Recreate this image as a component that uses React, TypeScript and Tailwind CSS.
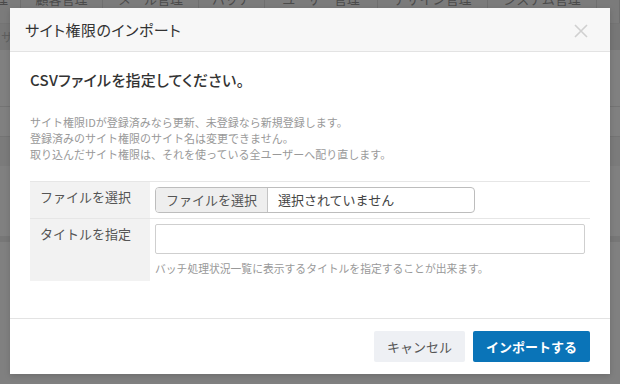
import React from "react";

const font = { fontFamily: '"Noto Sans CJK JP", "Noto Sans", sans-serif' };

const tabs: { t: string; w: string }[] = [
  { t: "理", w: "w-[21px] justify-end pr-[12px]" },
  { t: "顧客管理", w: "w-[82px]" },
  { t: "メール管理", w: "w-[96px]" },
  { t: "バッチ", w: "w-[66px]" },
  { t: "ユーザー管理", w: "w-[113px]" },
  { t: "デザイン管理", w: "w-[110px]" },
  { t: "システム管理", w: "w-[109px]" },
  { t: "", w: "flex-1" },
];

export default function App() {
  return (
    <div className="relative w-[620px] h-[384px] overflow-hidden bg-[#808080]" style={font}>
      {/* background page (behind overlay) */}
      <div className="flex flex-col">
        <div className="flex h-[24px] bg-[#7b7b7b] border-b border-[#747474] overflow-hidden">
          {tabs.map((x, i) => (
            <div
              key={i}
              className={`flex justify-center border-r border-[#6f6f6f] text-[13px] leading-[16px] text-[#4a4a4a] whitespace-nowrap ${x.w}`}
            >
              <span className="-mt-[9px]">{x.t}</span>
            </div>
          ))}
        </div>
        <div className="h-[26px] bg-[#777777] pl-[1px] text-[12px] text-[#5e5e5e] flex items-center">サイ</div>
        <div className="h-[57px] border-b border-[#747474]" />
        <div className="h-[30px] border-b border-[#747474]" />
        <div className="h-[29px] bg-[#7b7b7b]" />
        <div className="h-[70px]" />
        <div className="h-[6px] bg-[#777777]" />
      </div>

      {/* modal */}
      <div className="absolute left-[10px] top-[8px] w-[600px] h-[366px] bg-white flex flex-col shadow-[0_2px_6px_rgba(0,0,0,0.15)]">
        <div className="h-[44px] bg-[#f7f7f7] border-b border-[#e3e3e3] flex items-center justify-between pl-[15px] pr-[22px]">
          <div className="text-[15px] text-[#333] leading-none tracking-[0.5px] [font-feature-settings:'palt']">サイト権限のインポート</div>
          <svg width="14" height="14" viewBox="0 0 14 14" className="mt-[3px]">
            <path d="M1 1 L13 13 M13 1 L1 13" stroke="#d0d0d0" strokeWidth="1.6" />
          </svg>
        </div>
        <div className="flex-1 px-[20px] pt-[17px]">
          <div className="text-[15px] font-medium text-[#333] leading-[22px] tracking-[0.3px] [font-feature-settings:'palt']">CSVファイルを指定してください。</div>
          <div className="mt-[23px] text-[11px] leading-[16px] text-[#999]">
            <div>サイト権限IDが登録済みなら更新、未登録なら新規登録します。</div>
            <div>登録済みのサイト権限のサイト名は変更できません。</div>
            <div>取り込んだサイト権限は、それを使っている全ユーザーへ配り直します。</div>
          </div>
          <div className="mt-[19px] border-t border-[#e6e6e6]">
            <div className="flex border-b border-[#e6e6e6] h-[37px]">
              <div className="w-[120px] bg-[#f2f2f2] pl-[10px] pt-[6px] text-[13px] leading-[18px] text-[#555]">ファイルを選択</div>
              <div className="flex-1 pl-[5px] pt-[5px]">
                <div className="flex w-[320px] h-[26px] border border-[#bdbdbd] rounded-[4px] overflow-hidden text-[13px]">
                  <div className="w-[112px] bg-[#eeeeee] border-r border-[#c4c4c4] flex items-center justify-center text-[#555]">ファイルを選択</div>
                  <div className="pl-[10px] flex items-center text-[#444]">選択されていません</div>
                </div>
              </div>
            </div>
            <div className="flex h-[62px]">
              <div className="w-[120px] bg-[#f2f2f2] pl-[10px] pt-[6px] text-[13px] leading-[18px] text-[#555]">タイトルを指定</div>
              <div className="flex-1 pl-[5px] pt-[5px]">
                <div className="w-[430px] h-[30px] border border-[#cfcfcf] rounded-[2px]" />
                <div className="mt-[7px] text-[10.8px] text-[#999] leading-[14px] whitespace-nowrap">
                  バッチ処理状況一覧に表示するタイトルを指定することが出来ます。
                </div>
              </div>
            </div>
          </div>
        </div>
        <div className="h-[56px] border-t border-[#e3e3e3] flex items-start justify-end gap-[8px] pr-[20px] pt-[12px]">
          <button className="h-[31px] w-[91px] bg-[#eef0f4] rounded-[2px] text-[13px] text-[#555]">キャンセル</button>
          <button className="h-[31px] w-[117px] bg-[#0a74b8] rounded-[2px] text-[13px] font-bold text-white">インポートする</button>
        </div>
      </div>
    </div>
  );
}
